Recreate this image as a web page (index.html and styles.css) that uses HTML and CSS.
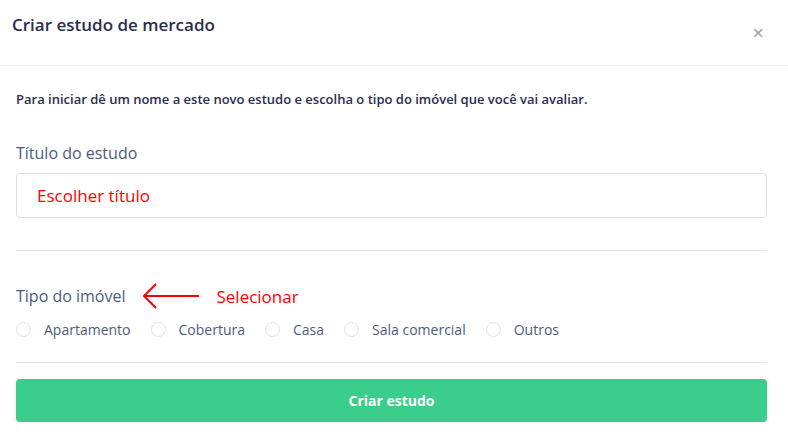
FILE: index.html
```html
<!DOCTYPE html>
<html lang="pt">
<head>
  <meta charset="UTF-8">
  <title>Criar estudo de mercado</title>
  <link rel="stylesheet" href="styles.css">
</head>
<body>

  <div class="modal">
    <div class="modal-header">
      <h3 class="modal-title">Criar estudo de mercado</h3>
      <span class="close">&times;</span>
    </div>

    <div class="modal-body">
      <p class="intro">Para iniciar dê um nome a este novo estudo e escolha o tipo do imóvel que você vai avaliar.</p>

      <label class="field-label" for="titulo">Título do estudo</label>
      <div class="input-box">
        <input type="text" id="titulo" placeholder="Escolher título">
      </div>

      <hr class="divider">

      <div class="type-head">
        <span class="field-label">Tipo do imóvel</span>
        <svg class="arrow" width="60" height="28" viewBox="0 0 60 28">
          <path d="M58 14H3M15 2L3 14l12 12" fill="none" stroke="#ff0000" stroke-width="2"/>
        </svg>
        <span class="hint">Selecionar</span>
      </div>

      <div class="radios">
        <label class="radio"><span class="dot"></span>Apartamento</label>
        <label class="radio"><span class="dot"></span>Cobertura</label>
        <label class="radio"><span class="dot"></span>Casa</label>
        <label class="radio"><span class="dot"></span>Sala comercial</label>
        <label class="radio"><span class="dot"></span>Outros</label>
      </div>

      <hr class="divider bottom">

      <button type="button" class="btn-create">Criar estudo</button>
    </div>
  </div>

</body>
</html>
```

FILE: styles.css
```css
body {
  margin: 0;
  font-family: "Open Sans", Arial, sans-serif;
  background-color: #ffffff;
  color: #2b2d4f;
}

.modal {
  width: 788px;
}

.modal-header {
  display: flex;
  justify-content: space-between;
  align-items: center;
  height: 66px;
  padding: 0 24px 0 12px;
  border-bottom: 1px solid #e8ebee;
  box-sizing: border-box;
}

.modal-title {
  margin: 0 0 17px 0;
  font-size: 17px;
  font-weight: 600;
  color: #2b2d4f;
}

.close {
  font-size: 20px;
  color: #a9a9a9;
  font-weight: 600;
  line-height: 1;
}

.modal-body {
  padding: 0 21px 0 16px;
}

.intro {
  margin: 25px 0 0 0;
  font-size: 13px;
  font-weight: 600;
  line-height: 17px;
  color: #2b2d4f;
}

.field-label {
  display: block;
  margin-top: 34px;
  font-size: 16px;
  color: #4e5b7b;
  line-height: 22px;
}

.input-box {
  margin-top: 9px;
  height: 45px;
  border: 1px solid #dcdfe4;
  border-radius: 4px;
  box-sizing: border-box;
}

.input-box input {
  width: 100%;
  height: 100%;
  border: none;
  outline: none;
  background: transparent;
  padding: 0 0 0 20px;
  box-sizing: border-box;
  font-family: "Open Sans", Arial, sans-serif;
  font-size: 17px;
}

.input-box input::placeholder {
  color: #ff0000;
  opacity: 1;
}

.divider {
  border: none;
  border-top: 1px solid #e6e8eb;
  margin: 32px 0 0 0;
}

.type-head {
  display: flex;
  align-items: center;
  margin-top: 32px;
  height: 26px;
}

.type-head .field-label {
  margin-top: 0;
}

.arrow {
  margin-left: 16px;
}

.hint {
  margin-left: 15px;
  font-family: "Open Sans", Arial, sans-serif;
  font-size: 17px;
  color: #ff0000;
}

.radios {
  display: flex;
  align-items: center;
  margin-top: 10px;
  height: 20px;
}

.radio {
  display: flex;
  align-items: center;
  font-size: 14px;
  color: #4e5b7b;
  margin-right: 20px;
}

.dot {
  width: 15px;
  height: 15px;
  border: 1px solid #dfe1e5;
  border-radius: 50%;
  margin-right: 13px;
  box-sizing: border-box;
}

.divider.bottom {
  margin-top: 23px;
}

.btn-create {
  display: block;
  width: 100%;
  height: 43px;
  margin-top: 16px;
  border: none;
  border-radius: 4px;
  background-color: #3acd8b;
  color: #ffffff;
  font-family: "Open Sans", Arial, sans-serif;
  font-size: 14px;
  font-weight: 700;
  box-shadow: 0 2px 4px rgba(0, 0, 0, 0.12);
}
```
